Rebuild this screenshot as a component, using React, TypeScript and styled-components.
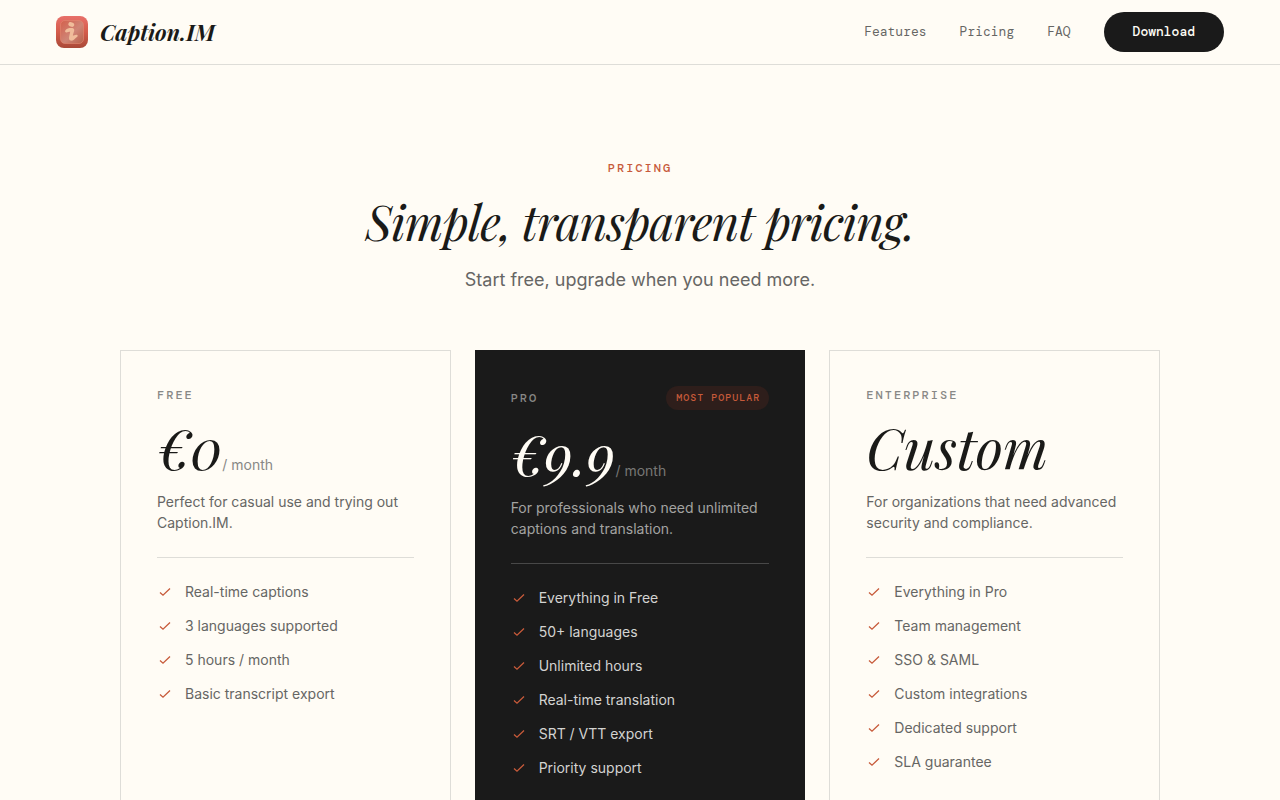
import React from "react";
import styled, { createGlobalStyle } from "styled-components";

const color = {
  paper: "#fffcf5",
  ink: "#1a1a18",
  dark: "#1a1a1a",
  body: "#666664",
  muted: "#888886",
  line: "#deddd8",
  accent: "#c75a3a",
};
const serif = `"Playfair Display", "Liberation Serif", serif`;
const sans = `Inter, "Liberation Sans", sans-serif`;
const mono = `"DM Mono", "Liberation Mono", monospace`;

const GlobalStyle = createGlobalStyle`
  *, *::before, *::after { box-sizing: border-box; }
  body {
    margin: 0;
    background: ${color.paper};
    color: ${color.ink};
    font-family: ${sans};
  }
  h1, h2, p, ul { margin: 0; padding: 0; }
`;

const Header = styled.header`
  position: sticky;
  top: 0;
  z-index: 1;
  display: flex;
  align-items: center;
  justify-content: space-between;
  padding: 12px 56px;
  background: ${color.paper};
  border-bottom: 1px solid ${color.line};
`;

const Brand = styled.a`
  display: flex;
  align-items: center;
  gap: 12px;
  color: ${color.ink};
  font: italic 700 22px/32px ${serif};
  text-decoration: none;
`;

const Nav = styled.nav`
  display: flex;
  align-items: center;
  gap: 33px;
`;

const NavLink = styled.a`
  color: ${color.body};
  font: 400 13px/22px ${mono};
  text-decoration: none;
`;

const DownloadButton = styled.button`
  padding: 9px 29px;
  border: 0;
  border-radius: 20px;
  background: ${color.dark};
  color: ${color.paper};
  font: 700 13px/22px ${mono};
  cursor: pointer;
`;

const Section = styled.section`
  display: flex;
  flex-direction: column;
  align-items: center;
  padding: 94px 56px 96px;
`;

const Eyebrow = styled.p`
  color: ${color.accent};
  font: 700 12px/18px ${mono};
  letter-spacing: 2px;
  text-transform: uppercase;
`;

const Title = styled.h1`
  margin-top: 15px;
  font: italic 400 48px/58px ${serif};
  letter-spacing: -1px;
  text-align: center;
`;

const Lead = styled.p`
  margin-top: 15px;
  color: ${color.body};
  font-size: 18px;
  line-height: 30px;
  text-align: center;
`;

const Plans = styled.div`
  display: grid;
  grid-template-columns: repeat(3, minmax(0, 1fr));
  gap: 24px;
  width: 100%;
  max-width: 1040px;
  margin-top: 55px;

  @media (max-width: 900px) {
    grid-template-columns: 1fr;
  }
`;

const Card = styled.article<{ $featured?: boolean }>`
  --price: ${(p) => (p.$featured ? color.paper : color.ink)};
  --period: ${(p) => (p.$featured ? "#777775" : color.muted)};
  --summary: ${(p) => (p.$featured ? "#a3a3a1" : color.body)};
  --feature: ${(p) => (p.$featured ? "#d3d3d1" : color.body)};
  --rule: ${(p) => (p.$featured ? "#484848" : color.line)};
  padding: 36px;
  border: ${(p) => (p.$featured ? "0" : `1px solid ${color.line}`)};
  background: ${(p) => (p.$featured ? color.dark : color.paper)};
`;

const CardTop = styled.div`
  display: flex;
  align-items: center;
  justify-content: space-between;
  margin-bottom: 15px;
`;

const PlanName = styled.h2`
  color: ${color.muted};
  font: 700 12px/17px ${mono};
  letter-spacing: 2px;
  text-transform: uppercase;
`;

const Badge = styled.span`
  padding: 4px 9px 4px 10px;
  border-radius: 12px;
  background: #2e1e1b;
  color: ${color.accent};
  font: 700 10px/16px ${mono};
  letter-spacing: 1px;
  text-transform: uppercase;
`;

const Price = styled.p`
  display: flex;
  align-items: baseline;
  color: var(--price);
  font: italic 400 56px/56px ${serif};
`;

const Period = styled.span`
  color: var(--period);
  font: 400 14px/20px ${sans};
`;

const Summary = styled.p`
  margin-top: 16px;
  padding-bottom: 24px;
  border-bottom: 1px solid var(--rule);
  color: var(--summary);
  font-size: 14px;
  line-height: 21px;
`;

const Features = styled.ul`
  display: flex;
  flex-direction: column;
  gap: 14px;
  margin-top: 24px;
  list-style: none;
`;

const Feature = styled.li`
  display: flex;
  align-items: center;
  gap: 12px;
  color: var(--feature);
  font-size: 14px;
  line-height: 20px;
`;

const Logo = () => (
  <svg width="32" height="32" viewBox="0 0 32 32" aria-hidden="true">
    <defs>
      <linearGradient id="tile" x1="0" y1="0" x2="0" y2="1">
        <stop offset="0" stopColor="#e8706a" />
        <stop offset="0.5" stopColor="#d45c4b" />
        <stop offset="1" stopColor="#a94938" />
      </linearGradient>
      <linearGradient id="glass" x1="0" y1="0" x2="1" y2="1">
        <stop offset="0" stopColor="#d3604c" />
        <stop offset="0.55" stopColor="#cf8576" />
        <stop offset="1" stopColor="#b8604a" />
      </linearGradient>
    </defs>
    <rect width="32" height="32" rx="8" fill="url(#tile)" />
    <rect x="4.5" y="4.5" width="23" height="23" rx="4.5" fill="url(#glass)" stroke="#e08a72" strokeWidth="0.6" />
    <ellipse cx="15.3" cy="8.5" rx="3" ry="2.2" fill="#f0bd9b" transform="rotate(20 15.3 8.5)" />
    <path
      d="M9.3 14.6C10.4 12.5 13 12 15.2 12C18.4 12 18.7 13.6 17.8 16.1L16.8 19.2C18.3 20 20 18.1 21.5 19.2C22.5 20 20.5 21.1 19.4 22.3C17.8 24.1 16.4 25.2 14.6 24.6C12.5 23.9 13 21.4 13.5 19.2L14.2 15.8C12.7 15.8 10.8 17 9.7 16.3C9 15.9 8.9 15.3 9.3 14.6Z"
      fill="#f0bd9b"
    />
  </svg>
);

const Check = () => (
  <svg width="16" height="16" viewBox="0 0 16 16" fill="none" aria-hidden="true">
    <path d="M3 8.5L6 11.2L13 4.5" stroke={color.accent} strokeWidth="1.3" />
  </svg>
);

type Plan = {
  name: string;
  price: string;
  period?: string;
  summary: string;
  badge?: string;
  features: string[];
};

const plans: Plan[] = [
  {
    name: "Free",
    price: "€0",
    period: "/ month",
    summary: "Perfect for casual use and trying out Caption.IM.",
    features: ["Real-time captions", "3 languages supported", "5 hours / month", "Basic transcript export"],
  },
  {
    name: "Pro",
    price: "€9.9",
    period: "/ month",
    summary: "For professionals who need unlimited captions and translation.",
    badge: "Most popular",
    features: [
      "Everything in Free",
      "50+ languages",
      "Unlimited hours",
      "Real-time translation",
      "SRT / VTT export",
      "Priority support",
    ],
  },
  {
    name: "Enterprise",
    price: "Custom",
    summary: "For organizations that need advanced security and compliance.",
    features: [
      "Everything in Pro",
      "Team management",
      "SSO & SAML",
      "Custom integrations",
      "Dedicated support",
      "SLA guarantee",
    ],
  },
];

export default function App() {
  return (
    <>
      <GlobalStyle />
      <Header>
        <Brand href="#">
          <Logo />
          Caption.IM
        </Brand>
        <Nav>
          <NavLink href="#features">Features</NavLink>
          <NavLink href="#pricing">Pricing</NavLink>
          <NavLink href="#faq">FAQ</NavLink>
          <DownloadButton type="button">Download</DownloadButton>
        </Nav>
      </Header>
      <main>
        <Section id="pricing">
          <Eyebrow>Pricing</Eyebrow>
          <Title>Simple, transparent pricing.</Title>
          <Lead>Start free, upgrade when you need more.</Lead>
          <Plans>
            {plans.map((plan) => (
              <Card key={plan.name} $featured={Boolean(plan.badge)}>
                <CardTop>
                  <PlanName>{plan.name}</PlanName>
                  {plan.badge && <Badge>{plan.badge}</Badge>}
                </CardTop>
                <Price>
                  {plan.price}
                  {plan.period && <Period>{plan.period}</Period>}
                </Price>
                <Summary>{plan.summary}</Summary>
                <Features>
                  {plan.features.map((feature) => (
                    <Feature key={feature}>
                      <Check />
                      {feature}
                    </Feature>
                  ))}
                </Features>
              </Card>
            ))}
          </Plans>
        </Section>
      </main>
    </>
  );
}
